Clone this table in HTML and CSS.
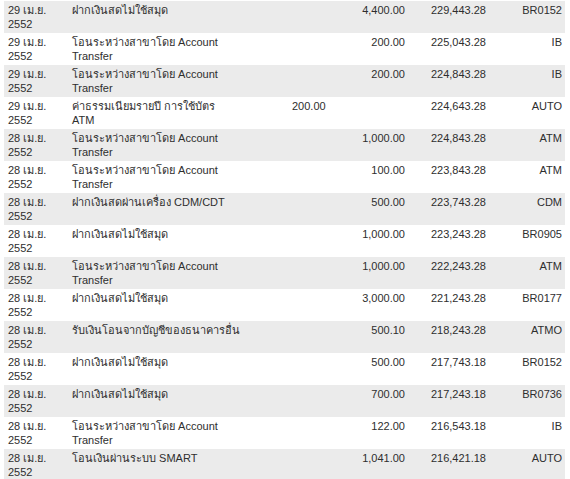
FILE: index.html
```html
<!DOCTYPE html>
<html lang="th">
<head>
<meta charset="utf-8">
<title>Statement</title>
<link rel="stylesheet" href="styles.css">
</head>
<body>
<table class="stmt">
  <colgroup>
    <col class="c-date"><col class="c-desc"><col class="c-dr"><col class="c-cr"><col class="c-bal"><col class="c-ch">
  </colgroup>
  <tbody>
    <tr class="alt"><td>29 เม.ย.<br>2552</td><td>ฝากเงินสดไม่ใช้สมุด</td><td class="dr"></td><td class="num">4,400.00</td><td class="num">229,443.28</td><td class="ch">BR0152</td></tr>
    <tr><td>29 เม.ย.<br>2552</td><td>โอนระหว่างสาขาโดย Account<br>Transfer</td><td class="dr"></td><td class="num">200.00</td><td class="num">225,043.28</td><td class="ch">IB</td></tr>
    <tr class="alt"><td>29 เม.ย.<br>2552</td><td>โอนระหว่างสาขาโดย Account<br>Transfer</td><td class="dr"></td><td class="num">200.00</td><td class="num">224,843.28</td><td class="ch">IB</td></tr>
    <tr><td>29 เม.ย.<br>2552</td><td>ค่าธรรมเนียมรายปี การใช้บัตร<br>ATM</td><td class="dr">200.00</td><td class="num"></td><td class="num">224,643.28</td><td class="ch">AUTO</td></tr>
    <tr class="alt"><td>28 เม.ย.<br>2552</td><td>โอนระหว่างสาขาโดย Account<br>Transfer</td><td class="dr"></td><td class="num">1,000.00</td><td class="num">224,843.28</td><td class="ch">ATM</td></tr>
    <tr><td>28 เม.ย.<br>2552</td><td>โอนระหว่างสาขาโดย Account<br>Transfer</td><td class="dr"></td><td class="num">100.00</td><td class="num">223,843.28</td><td class="ch">ATM</td></tr>
    <tr class="alt"><td>28 เม.ย.<br>2552</td><td>ฝากเงินสดผ่านเครื่อง CDM/CDT</td><td class="dr"></td><td class="num">500.00</td><td class="num">223,743.28</td><td class="ch">CDM</td></tr>
    <tr><td>28 เม.ย.<br>2552</td><td>ฝากเงินสดไม่ใช้สมุด</td><td class="dr"></td><td class="num">1,000.00</td><td class="num">223,243.28</td><td class="ch">BR0905</td></tr>
    <tr class="alt"><td>28 เม.ย.<br>2552</td><td>โอนระหว่างสาขาโดย Account<br>Transfer</td><td class="dr"></td><td class="num">1,000.00</td><td class="num">222,243.28</td><td class="ch">ATM</td></tr>
    <tr><td>28 เม.ย.<br>2552</td><td>ฝากเงินสดไม่ใช้สมุด</td><td class="dr"></td><td class="num">3,000.00</td><td class="num">221,243.28</td><td class="ch">BR0177</td></tr>
    <tr class="alt"><td>28 เม.ย.<br>2552</td><td>รับเงินโอนจากบัญชีของธนาคารอื่น</td><td class="dr"></td><td class="num">500.10</td><td class="num">218,243.28</td><td class="ch">ATMO</td></tr>
    <tr><td>28 เม.ย.<br>2552</td><td>ฝากเงินสดไม่ใช้สมุด</td><td class="dr"></td><td class="num">500.00</td><td class="num">217,743.18</td><td class="ch">BR0152</td></tr>
    <tr class="alt"><td>28 เม.ย.<br>2552</td><td>ฝากเงินสดไม่ใช้สมุด</td><td class="dr"></td><td class="num">700.00</td><td class="num">217,243.18</td><td class="ch">BR0736</td></tr>
    <tr><td>28 เม.ย.<br>2552</td><td>โอนระหว่างสาขาโดย Account<br>Transfer</td><td class="dr"></td><td class="num">122.00</td><td class="num">216,543.18</td><td class="ch">IB</td></tr>
    <tr class="alt"><td>28 เม.ย.<br>2552</td><td>โอนเงินผ่านระบบ SMART</td><td class="dr"></td><td class="num">1,041.00</td><td class="num">216,421.18</td><td class="ch">AUTO</td></tr>
  </tbody>
</table>
</body>
</html>
```
FILE: styles.css
```css
html, body {
  margin: 0;
  padding: 0;
  background: #ffffff;
}
body {
  padding: 1px 0 0 4px;
  font-family: "Liberation Sans", Arial, sans-serif;
  font-size: 11px;
  color: #2e2e2e;
}
.stmt {
  border-collapse: collapse;
  border-spacing: 0;
  table-layout: fixed;
  width: 561px;
}
.c-date { width: 64px; }
.c-desc { width: 220px; }
.c-dr { width: 52px; }
.c-cr { width: 69px; }
.c-bal { width: 81px; }
.c-ch { width: 75px; }
.stmt td {
  height: 28px;
  padding: 2px 4px;
  line-height: 14px;
  vertical-align: top;
  white-space: nowrap;
  overflow: hidden;
}
.stmt tr.alt td {
  background: #ebebeb;
}
.stmt td.num {
  text-align: right;
}
.stmt td.ch {
  text-align: right;
  padding-right: 3px;
}
```
